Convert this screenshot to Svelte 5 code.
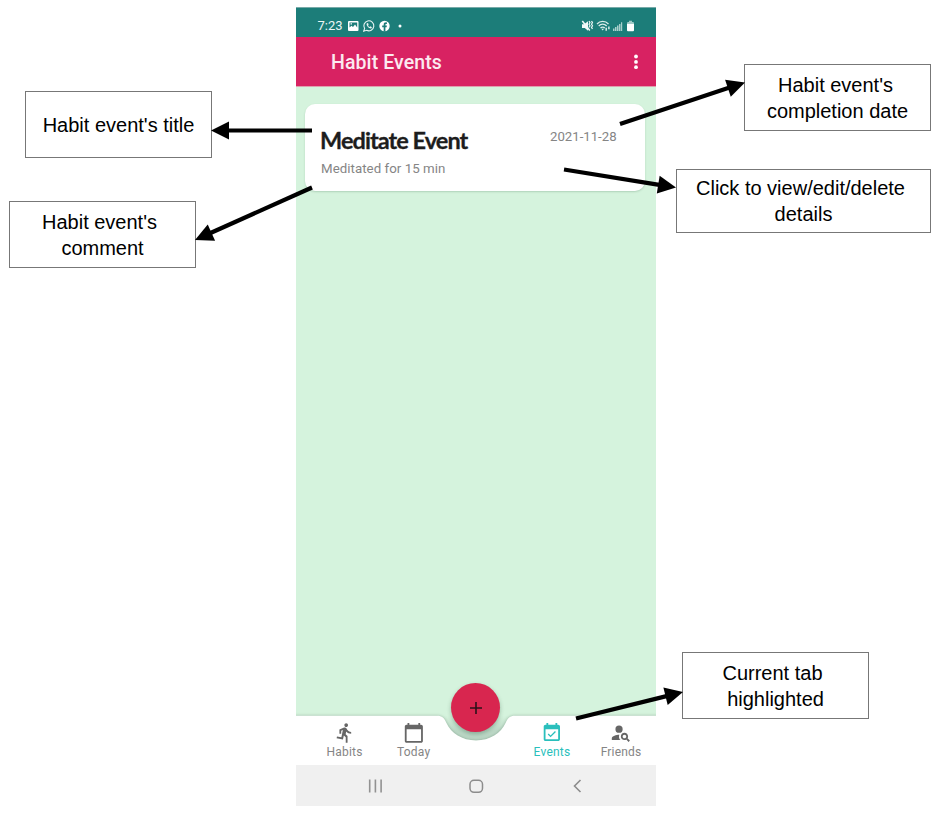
<script>
  const callouts = [
    { id: 'title', x: 25, y: 91, w: 187, h: 67, lines: [["Habit event's title", 0]] },
    { id: 'comment', x: 9, y: 201, w: 187, h: 67, lines: [["Habit event's", -3], ['comment', 0]] },
    { id: 'date', x: 744, y: 64, w: 187, h: 67, lines: [["Habit event's", -2], ['completion date', 0]] },
    { id: 'details', x: 676, y: 169, w: 255, h: 64, lines: [['Click to view/edit/delete', -3], ['details', 0]] },
    { id: 'tab', x: 682, y: 652, w: 187, h: 67, lines: [['Current tab', -3], ['highlighted', 0]] }
  ];

  const arrows = [
    [312, 130.5, 211, 130.5],
    [312, 187.5, 195, 240],
    [620, 124, 745, 82.5],
    [564, 169.5, 676, 187.5],
    [576, 718.5, 683, 692]
  ].map(([x1, y1, x2, y2]) => {
    const length = Math.hypot(x2 - x1, y2 - y1);
    const ux = (x2 - x1) / length;
    const uy = (y2 - y1) / length;
    const bx = x2 - ux * 18;
    const by = y2 - uy * 18;
    return {
      x1, y1, bx: bx + ux, by: by + uy,
      head: `${x2},${y2} ${bx - uy * 9},${by + ux * 9} ${bx + uy * 9},${by - ux * 9}`
    };
  });

  const tabs = [
    {
      label: 'Habits',
      d: 'M13.49 5.48c1.1 0 2-.9 2-2s-.9-2-2-2-2 .9-2 2 .9 2 2 2zm-3.6 13.9l1-4.4 2.1 2v6h2v-7.5l-2.1-2 .6-3c1.3 1.5 3.3 2.5 5.5 2.5v-2c-1.9 0-3.5-1-4.3-2.4l-1-1.6c-.4-.6-1-1-1.7-1-.3 0-.5.1-.8.1l-5.2 2.2v4.7h2v-3.4l1.8-.7-1.6 8.1-4.9-1-.4 2 7 1.4z'
    },
    {
      label: 'Today',
      d: 'M20 3h-1V1h-2v2H7V1H5v2H4c-1.1 0-2 .9-2 2v16c0 1.1.9 2 2 2h16c1.1 0 2-.9 2-2V5c0-1.1-.9-2-2-2zm0 18H4V8h16v13z'
    },
    null,
    {
      label: 'Events',
      active: true,
      d: 'M16.53 11.06L15.47 10l-4.88 4.88-2.12-2.12-1.06 1.06L10.59 17l5.94-5.94zM19 3h-1V1h-2v2H8V1H6v2H5c-1.11 0-1.99.9-1.99 2L3 19c0 1.1.89 2 2 2h14c1.1 0 2-.9 2-2V5c0-1.1-.9-2-2-2zm0 16H5V8h14v11z'
    },
    {
      label: 'Friends',
      d: 'M10 4a4 4 0 1 0 0 8a4 4 0 1 0 0-8zM10.35 14.01C7.62 13.91 2 15.27 2 18v2h9.54c-2.47-2.76-1.23-5.89-1.19-5.99zM19.43 18.02c.36-.59.57-1.28.57-2.02 0-2.21-1.79-4-4-4s-4 1.79-4 4 1.79 4 4 4c.74 0 1.43-.22 2.02-.57L20.59 22 22 20.59l-2.57-2.57zM16 18c-1.1 0-2-.9-2-2s.9-2 2-2 2 .9 2 2-.9 2-2 2z'
    }
  ];
</script>

<div class="canvas">
  <main class="phone">
    <header class="status">
      <span class="clock">7:23</span>
      <svg class="notices" width="56" height="14" viewBox="0 0 56 14">
        <path fill="#fff" fill-rule="evenodd" d="M2 2h8.500a1 1 0 0 1 1 1v8a1 1 0 0 1-1 1H2a1 1 0 0 1-1-1V3a1 1 0 0 1 1-1zM2.500 3.500v5L4.500 6.800 6 8l2-2.500 2.200 3V3.500zM3.500 4.300h1.500v1.300H3.500z" />
        <path fill="none" stroke="#e8f3f2" stroke-width="1.100" d="M16.700 12.200l.9-2.700a5 5 0 1 1 2 1.800z" />
        <path fill="#e8f3f2" d="M20 4.200c-1.500 1.400 1.600 5.700 4.200 5.200l.8-1.100-1.600-1-.8.700c-.8-.4-1.200-.9-1.500-1.600l.5-.8-.6-1.500z" />
        <circle cx="37.500" cy="7" r="5.200" fill="#fff" />
        <path fill="#1c7d79" d="M36.700 12.400V8.300h-1.500V6.600h1.500V5.500c0-1.600 1-2.400 3.200-2.100v1.500c-1.100-.1-1.500.1-1.500.8v.9h1.500l-.3 1.700h-1.200v4.100z" />
        <circle cx="53" cy="7" r="1.500" fill="#fff" />
      </svg>
      <svg class="signals" width="56" height="14" viewBox="0 0 56 14">
        <path fill="#f2f8f8" d="M1 5.200h2.200L7 2.200v9.600L3.800 9H1z" />
        <path stroke="#f2f8f8" stroke-width="1.500" fill="none" d="M1.300 2l7.500 9.500" />
        <path stroke="#e8f3f2" stroke-width="1.200" fill="none" d="M8 2l1 1.600-1 1.600 1 1.600-1 1.600M10.500 2l1 1.600-1 1.600 1 1.600-1 1.600 1 1.600" />
        <path stroke="#d9ebe9" stroke-width="1.300" fill="none" d="M16 5c3.200-3.500 8.200-3.500 11.500 0M17.700 7c2.300-2.400 5.700-2.400 8 0M19.500 9c1.300-1.300 3-1.300 4.300 0" />
        <path fill="#e8f3f2" d="M20.300 9.800h2.700l-1.300 1.700zM24.500 8.800h1.400v3h-1.400zM27.200 7.500h1.400v2.700h-1.400z" />
        <path fill="#a9d0cd" d="M32 9.500h1.500V12H32zM34 8h1.500v4H34zM36 6.500h1.500V12H36zM38 5h1.500v7H38zM40 3.300h1.200V12H40z" />
        <path fill="#fff" d="M46 5h7v6.200a1 1 0 0 1-1 1h-5a1 1 0 0 1-1-1z" />
        <path fill="#9fcac7" d="M48 1.800h3V3h1.200l.8.800V5h-7V3.800l.8-.8H48z" />
      </svg>
    </header>

    <div class="appbar">
      <h1>Habit Events</h1>
      <svg width="6" height="18" viewBox="0 0 6 18" fill="#fff">
        <circle cx="3" cy="3.500" r="1.900" />
        <circle cx="3" cy="8.900" r="1.900" />
        <circle cx="3" cy="14.200" r="1.900" />
      </svg>
    </div>

    <section class="content">
      <article class="card">
        <div class="about">
          <h2>Meditate Event</h2>
          <p>Meditated for 15 min</p>
        </div>
        <time>2021-11-28</time>
      </article>
    </section>

    <nav class="tabs">
      <svg class="surface" width="360" height="50" viewBox="0 0 360 50">
        <defs>
          <linearGradient id="notch" x1="0" y1="0" x2="0" y2="1">
            <stop offset="0" stop-color="#bcd8c6" stop-opacity="0" />
            <stop offset="0.6" stop-color="#bcd8c6" />
          </linearGradient>
        </defs>
        <path fill="url(#notch)" d="M146 .8h68L209.700 7.800C205 18.300 194 25.500 180 25.500S155 18.300 150.300 7.800z" />
        <path class="sheet" fill="#fff" d="M-8 .8H141c5 0 7.500 2.500 9.300 7C155 18.300 166 25.500 180 25.500S205 18.300 209.700 7.800c1.800-4.500 4.300-7 9.300-7H368V50H-8z" />
      </svg>
      {#each tabs as tab}
        {#if tab}
          <div class="tab" class:active={tab.active}>
            <svg width="21.700" height="21.700" viewBox="0 0 24 24">
              <path fill="currentColor" fill-rule="evenodd" d={tab.d} />
            </svg>
            <span>{tab.label}</span>
          </div>
        {:else}
          <div class="tab"></div>
        {/if}
      {/each}
      <button class="fab" aria-label="Add event">
        <svg width="14" height="14" viewBox="0 0 14 14"><path d="M7 1v12M1 7h12" stroke="#2b1219" stroke-width="1.600" /></svg>
      </button>
    </nav>

    <footer class="system">
      <svg width="16" height="16" viewBox="0 0 16 16"><path d="M2.700 1.500v13M8.400 1.500v13M14.100 1.500v13" stroke="#929292" stroke-width="1.600" /></svg>
      <svg width="16" height="16" viewBox="0 0 16 16"><rect x="2" y="2.300" width="12.500" height="12" rx="4" fill="none" stroke="#8c8c8c" stroke-width="1.500" /></svg>
      <svg width="16" height="16" viewBox="0 0 16 16"><path d="M11.500 2L5.500 8l6 6" fill="none" stroke="#8c8c8c" stroke-width="1.600" /></svg>
    </footer>
  </main>

  {#each callouts as c (c.id)}
    <div class="callout" style="left:{c.x}px;top:{c.y}px;width:{c.w}px;height:{c.h}px">
      {#each c.lines as [text, shift]}
        <span style="margin-left:{shift * 2}px">{text}</span>
      {/each}
    </div>
  {/each}

  <svg class="arrows" width="942" height="814" viewBox="0 0 942 814">
    {#each arrows as a}
      <line x1={a.x1} y1={a.y1} x2={a.bx} y2={a.by} stroke="#000" stroke-width="4.200" />
      <polygon points={a.head} />
    {/each}
  </svg>
</div>

<style>
  :global(body) { background: #fff; }
  .canvas {
    position: relative;
    box-sizing: border-box;
    width: 942px;
    height: 814px;
    padding: 7px 0 0 296px;
    overflow: hidden;
    font-family: Roboto, "Liberation Sans", sans-serif;
  }
  .canvas svg { display: block; flex: none; }
  .phone {
    display: flex;
    flex-direction: column;
    width: 359.600px;
    height: 799px;
  }
  .status {
    box-sizing: border-box;
    height: 30px;
    display: flex;
    align-items: center;
    padding: 6px 18.600px 0 21.500px;
    background: #1c7d79;
    border-top: 1px solid #78aaa8;
    color: #edf6f5;
  }
  .clock { width: 29px; font-size: 13px; line-height: 16px; }
  .signals { margin-left: auto; }
  .appbar {
    box-sizing: border-box;
    height: 50px;
    display: flex;
    align-items: center;
    justify-content: space-between;
    padding: 2px 16.300px 0 35px;
    background: #d82262;
    border-bottom: 1px solid #dfa0ae;
  }
  .appbar svg { margin-top: -1px; }
  h1, h2, p { margin: 0; }
  h1 {
    margin-top: 1px;
    color: #fce9f0;
    font-size: 19.500px;
    font-weight: 500;
    line-height: 24px;
    letter-spacing: 0.100px;
  }
  .content {
    flex: 1;
    padding: 17px 11px 0 9px;
    background: #d5f3dd;
  }
  .card {
    box-sizing: border-box;
    height: 87px;
    display: flex;
    justify-content: space-between;
    padding: 21px 28px 0 15px;
    border-radius: 10px;
    background: #fff;
    box-shadow: 0 1px 2px rgba(40, 90, 60, 0.22);
  }
  h2 {
    color: #1d1d1d;
    font-family: Lato, "Open Sans", sans-serif;
    font-size: 23.500px;
    font-weight: 700;
    line-height: 30px;
    letter-spacing: -0.950px;
    white-space: nowrap;
    -webkit-text-stroke: 0.300px #1d1d1d;
  }
  .about p {
    margin: 5px 0 0 1px;
    color: #858585;
    font-size: 13.300px;
    line-height: 18px;
    letter-spacing: 0.040px;
  }
  time {
    padding-top: 3px;
    color: #858585;
    font-size: 13.200px;
    line-height: 18px;
  }
  .tabs {
    position: relative;
    display: flex;
    height: 50px;
    padding-left: 14px;
    background: #d5f3dd;
  }
  .surface {
    position: absolute;
    left: 0;
    top: 0;
    overflow: visible;
    clip-path: inset(-10px 0 0 0);
  }
  .sheet { filter: drop-shadow(0 0 1.500px rgba(40, 75, 55, 0.35)); }
  .tab {
    position: relative;
    flex: 1;
    display: flex;
    flex-direction: column;
    align-items: center;
    padding-top: 7.400px;
    color: #666;
  }
  .tab span {
    margin-top: 0.900px;
    color: #858585;
    font-size: 12px;
    line-height: 14px;
    letter-spacing: 0.200px;
  }
  .tab.active, .tab.active span { color: #2abfbc; }
  .fab {
    position: absolute;
    left: 155.300px;
    top: -32px;
    width: 49px;
    height: 49px;
    padding: 0;
    display: flex;
    align-items: center;
    justify-content: center;
    border: 0;
    border-radius: 50%;
    background: #d8264f;
    box-shadow: 0 2px 4px rgba(20, 70, 40, 0.3);
  }
  .system {
    display: flex;
    align-items: center;
    justify-content: space-between;
    height: 41px;
    padding: 1px 71px 0 71px;
    background: #f0f0f0;
    box-sizing: border-box;
  }
  .callout {
    position: absolute;
    box-sizing: border-box;
    display: flex;
    flex-direction: column;
    align-items: center;
    justify-content: center;
    border: 1px solid #777;
    background: #fff;
    color: #000;
    font-family: "Liberation Sans", Arial, sans-serif;
    font-size: 20px;
    line-height: 26px;
    white-space: nowrap;
  }
  .arrows {
    position: absolute;
    left: 0;
    top: 0;
    pointer-events: none;
  }
</style>
